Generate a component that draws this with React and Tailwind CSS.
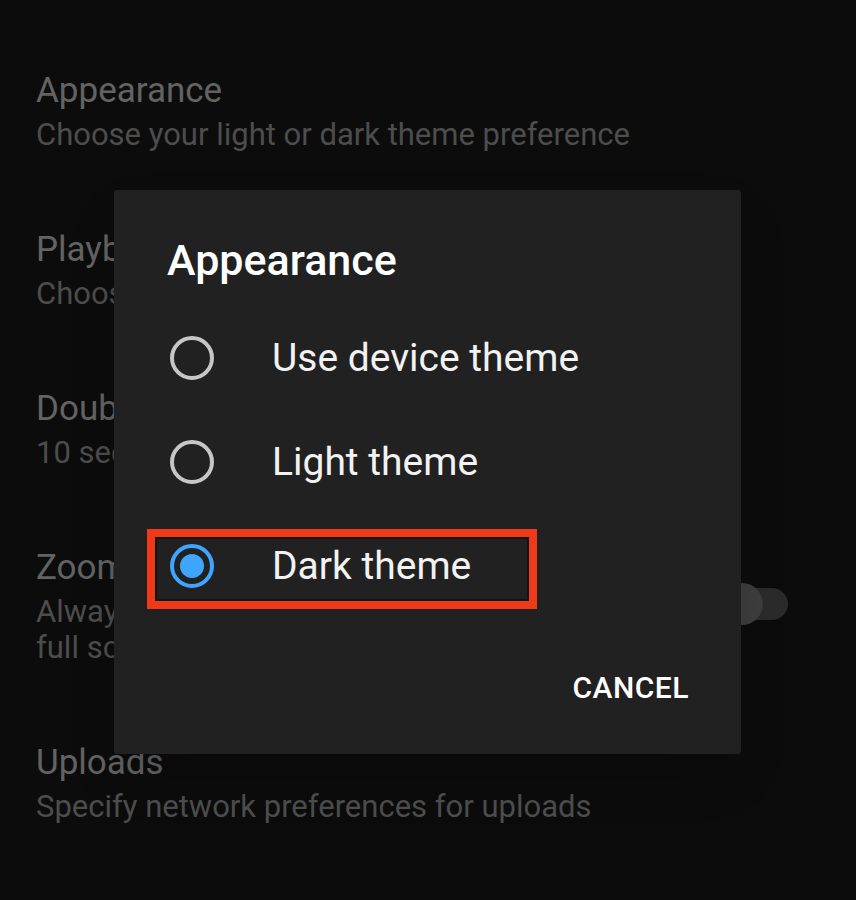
import React from 'react';

const settings = [
  { title: 'Appearance', lines: ['Choose your light or dark theme preference'] },
  { title: 'Playback in feeds', lines: ['Choose whether videos play as you browse'] },
  { title: 'Double-tap to seek', lines: ['10 seconds'] },
  { title: 'Zoom to fill screen', lines: ['Always zoom so videos fill the screen in', 'full screen'], toggle: true },
  { title: 'Uploads', lines: ['Specify network preferences for uploads'] },
];

const options = [
  { label: 'Use device theme', selected: false },
  { label: 'Light theme', selected: false },
  { label: 'Dark theme', selected: true },
];

function Radio({ selected }) {
  if (selected) {
    return (
      <div className="w-[44px] h-[44px] rounded-full border-[4px] border-[#3ea6ff] flex items-center justify-center shrink-0">
        <div className="w-[24px] h-[24px] rounded-full bg-[#3ea6ff]" />
      </div>
    );
  }
  return <div className="w-[44px] h-[44px] rounded-full border-[4px] border-[#c6c6c6] shrink-0" />;
}

export default function App() {
  return (
    <div
      className="relative w-[856px] h-[900px] bg-[#0c0c0c] overflow-hidden"
      style={{ fontFamily: 'Roboto, "Noto Sans", sans-serif' }}
    >
      {/* settings list behind the dialog */}
      <div className="flex flex-col gap-[71px] pt-[65px] pl-[36px] pr-[68px]">
        {settings.map((s) => (
          <div key={s.title} className="flex items-start justify-between">
            <div>
              <div className="text-[35px] leading-[52px] text-[#636363] whitespace-nowrap">{s.title}</div>
              {s.lines.map((l) => (
                <div key={l} className="text-[31px] leading-[36px] text-[#4d4d4d] whitespace-nowrap">
                  {l}
                </div>
              ))}
            </div>
            {s.toggle && (
              <div className="relative mt-[46px] w-[66px] h-[32px] rounded-full bg-[#2b2b2b]">
                <div className="absolute -left-[1px] -top-[5px] w-[42px] h-[42px] rounded-full bg-[#3e3e3e]" />
              </div>
            )}
          </div>
        ))}
      </div>

      {/* dialog */}
      <div className="absolute left-[114px] top-[190px] w-[627px] h-[564px] bg-[#212121] rounded-[3px] shadow-2xl flex flex-col">
        <div className="pt-[44px] pl-[53px] text-[43px] leading-[52px] font-medium text-white">Appearance</div>
        <div className="mt-[20px] flex flex-col">
          {options.map((o) => (
            <div key={o.label} className="h-[104px] flex items-center pl-[56px] gap-[58px]">
              <Radio selected={o.selected} />
              <span className="text-[39px] text-[#f2f2f2]">{o.label}</span>
            </div>
          ))}
        </div>
        <div className="mt-[50px] flex justify-end pr-[52px]">
          <span className="text-[30px] leading-[40px] font-medium text-white tracking-[0.5px]">CANCEL</span>
        </div>

        {/* highlight box */}
        <div className="absolute left-[33px] top-[339px] w-[390px] h-[80px] border-[8px] border-[#ee3a19]">
          <div className="w-full h-full border-[2px] border-[#141414]" />
        </div>
      </div>
    </div>
  );
}
